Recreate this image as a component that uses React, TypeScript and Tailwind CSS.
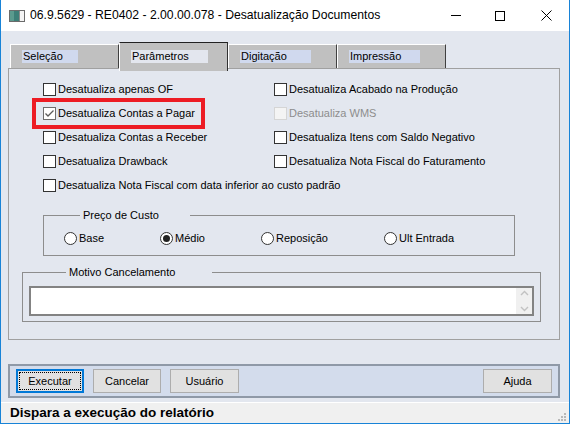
import React from "react";

const leftChecks = [
  { label: "Desatualiza apenas OF", checked: false },
  { label: "Desatualiza Contas a Pagar", checked: true },
  { label: "Desatualiza Contas a Receber", checked: false },
  { label: "Desatualiza Drawback", checked: false },
];

const rightChecks = [
  { label: "Desatualiza Acabado na Produção", disabled: false },
  { label: "Desatualiza WMS", disabled: true },
  { label: "Desatualiza Itens com Saldo Negativo", disabled: false },
  { label: "Desatualiza Nota Fiscal do Faturamento", disabled: false },
];

function Check({
  label,
  checked = false,
  disabled = false,
}: {
  label: string;
  checked?: boolean;
  disabled?: boolean;
}) {
  return (
    <div className="flex h-[24px] items-center">
      <span
        className={
          disabled
            ? "h-[13px] w-[13px] border border-[#d5d5d5] bg-[#f4f4f4]"
            : checked
              ? "flex h-[13px] w-[13px] items-center justify-center border border-[#6d6d6d] bg-white"
              : "h-[13px] w-[13px] border border-[#333333] bg-white"
        }
      >
        {checked && (
          <svg width="11" height="11" viewBox="0 0 11 11">
            <path d="M1.5 5.5 L4 8 L9.5 2.5" fill="none" stroke="#5a5a5a" strokeWidth="1.3" />
          </svg>
        )}
      </span>
      <span className={disabled ? "ml-[2px] text-[#8d8d8d]" : "ml-[2px]"}>{label}</span>
    </div>
  );
}

function Radio({ label, checked = false, w }: { label: string; checked?: boolean; w: string }) {
  return (
    <div className={`flex items-center ${w}`}>
      <span className="flex h-[13px] w-[13px] items-center justify-center rounded-full border border-[#333333] bg-white">
        {checked && <span className="h-[7px] w-[7px] rounded-full bg-[#222222]" />}
      </span>
      <span className="ml-[2px]">{label}</span>
    </div>
  );
}

function Tab({ label, w, active = false }: { label: string; w: string; active?: boolean }) {
  return (
    <div
      className={
        active
          ? "relative z-10 -mb-[3px] h-[29px] w-[109px] border-t border-l border-r border-t-[#222222] border-l-white border-r-[#303030] bg-[#c0c0c0] pl-[11px] pt-[7px]"
          : "h-[24px] w-[109px] border-t border-l border-r border-t-white border-l-white border-r-[#404040] bg-[#c0c0c0] pl-[11px] pt-[5px]"
      }
    >
      <div className={`h-[13px] ${w} pl-[1px] leading-[13px] ${active ? "bg-[#e3e6ee]" : "bg-[#d0d9ee]"}`}>
        {label}
      </div>
    </div>
  );
}

function Button({ label, w, focused = false }: { label: string; w: string; focused?: boolean }) {
  return (
    <button
      className={
        focused
          ? `flex h-[24px] ${w} items-center justify-center border-2 border-[#0078d7] bg-[#e1e1e1] p-[1px]`
          : `flex h-[24px] ${w} items-center justify-center border border-[#adadad] bg-[#e1e1e1]`
      }
    >
      {focused ? (
        <span className="flex h-full w-full items-center justify-center border border-dotted border-black">
          {label}
        </span>
      ) : (
        label
      )}
    </button>
  );
}

export default function App() {
  return (
    <div className="flex h-[424px] w-[570px] flex-col border-x border-b border-[#1883d7] bg-[#e3e7ef] font-['Liberation_Sans',sans-serif] text-[11px] text-black">
      {/* title bar */}
      <div className="flex h-[31px] items-center bg-white">
        <svg className="ml-[8px]" width="16" height="12" viewBox="0 0 16 12">
          <rect x="0.5" y="0.5" width="15" height="11" fill="#e8e8e8" stroke="#6b6b6b" />
          <rect x="1" y="1" width="9" height="10" fill="#3d7f78" />
          <rect x="1" y="1" width="4" height="10" fill="#5b9a8e" />
          <rect x="11" y="1" width="4" height="10" fill="#f4f4f4" />
          <rect x="10" y="1" width="1" height="10" fill="#8a8a8a" />
        </svg>
        <span className="ml-[5px] text-[12.2px]">06.9.5629 - RE0402 - 2.00.00.078 - Desatualização Documentos</span>
        <div className="ml-auto flex items-center">
          <span className="mr-[34px] h-px w-[10px] bg-black" />
          <span className="mr-[36px] h-[10px] w-[10px] border border-black" />
          <svg className="mr-[17px]" width="11" height="11" viewBox="0 0 11 11">
            <path d="M0.5 0.5 L10.5 10.5 M10.5 0.5 L0.5 10.5" stroke="#000" strokeWidth="1" />
          </svg>
        </div>
      </div>

      {/* tabs */}
      <div className="mt-[11px] flex h-[26px] items-end pl-[9px]">
        <Tab label="Seleção" w="w-[56px]" />
        <Tab label="Parâmetros" w="w-[77px]" active />
        <Tab label="Digitação" w="w-[71px]" />
        <Tab label="Impressão" w="w-[71px]" />
      </div>

      {/* panel */}
      <div className="relative ml-[7px] mr-[9px] h-[272px] border border-[#a0a0a0]">
        <div className="flex pl-[34px] pt-[8px]">
          <div className="w-[231px]">
            {leftChecks.map((c) => (
              <Check key={c.label} label={c.label} checked={c.checked} />
            ))}
          </div>
          <div>
            {rightChecks.map((c) => (
              <Check key={c.label} label={c.label} disabled={c.disabled} />
            ))}
          </div>
        </div>
        <div className="pl-[34px]">
          <Check label="Desatualiza Nota Fiscal com data inferior ao custo padrão" />
        </div>

        <fieldset className="ml-[34px] mt-[12px] w-[472px] border border-[#8d8d8d] pb-[10px] pl-[20px] pt-[9px]">
          <legend className="ml-[16px] pl-[3px] pr-[31px] leading-[13px]">Preço de Custo</legend>
          <div className="flex h-[14px]">
            <Radio label="Base" w="w-[96px]" />
            <Radio label="Médio" w="w-[101px]" checked />
            <Radio label="Reposição" w="w-[123px]" />
            <Radio label="Ult Entrada" w="w-[110px]" />
          </div>
        </fieldset>

        <fieldset className="ml-[13px] mt-[10px] w-[519px] border border-[#8d8d8d] px-[6px] pb-[5px] pt-[7px]">
          <legend className="ml-[37px] pl-[3px] pr-[37px] leading-[13px]">Motivo Cancelamento</legend>
          <div className="flex h-[30px] border-2 border-[#838383] bg-white">
            <div className="flex-1" />
            <div className="flex w-[16px] flex-col items-center justify-between bg-[#f0f0f0] py-[2px]">
              <svg width="9" height="6" viewBox="0 0 9 6">
                <path d="M1 5 L4.5 1.5 L8 5" fill="none" stroke="#c2c2c2" strokeWidth="1.4" />
              </svg>
              <svg width="9" height="6" viewBox="0 0 9 6">
                <path d="M1 1 L4.5 4.5 L8 1" fill="none" stroke="#c2c2c2" strokeWidth="1.4" />
              </svg>
            </div>
          </div>
        </fieldset>

        {/* highlight annotation */}
        <div className="absolute left-[23px] top-[29px] h-[31px] w-[173px] border-[4px] border-[#ed1c24]" />
      </div>

      {/* button bar */}
      <div className="ml-[7px] mr-[9px] mt-[24px] flex h-[34px] items-center border-2 border-[#8f99a7] bg-[#d3dcec] px-[6px]">
        <Button label="Executar" w="w-[68px]" focused />
        <div className="ml-[9px]">
          <Button label="Cancelar" w="w-[68px]" />
        </div>
        <div className="ml-[9px]">
          <Button label="Usuário" w="w-[69px]" />
        </div>
        <div className="ml-auto">
          <Button label="Ajuda" w="w-[69px]" />
        </div>
      </div>

      {/* status bar */}
      <div className="mt-[4px] flex h-[21px] items-center border-t border-white bg-[#f0f0f0] pl-[9px]">
        <span className="text-[13.5px] font-bold">Dispara a execução do relatório</span>
        <svg className="ml-auto mr-[2px] self-end mb-[1px]" width="10" height="10" viewBox="0 0 10 10">
          <rect x="7" y="1" width="2" height="2" fill="#b8b8b8" />
          <rect x="4" y="4" width="2" height="2" fill="#b8b8b8" />
          <rect x="7" y="4" width="2" height="2" fill="#b8b8b8" />
          <rect x="1" y="7" width="2" height="2" fill="#b8b8b8" />
          <rect x="4" y="7" width="2" height="2" fill="#b8b8b8" />
          <rect x="7" y="7" width="2" height="2" fill="#b8b8b8" />
        </svg>
      </div>
    </div>
  );
}
